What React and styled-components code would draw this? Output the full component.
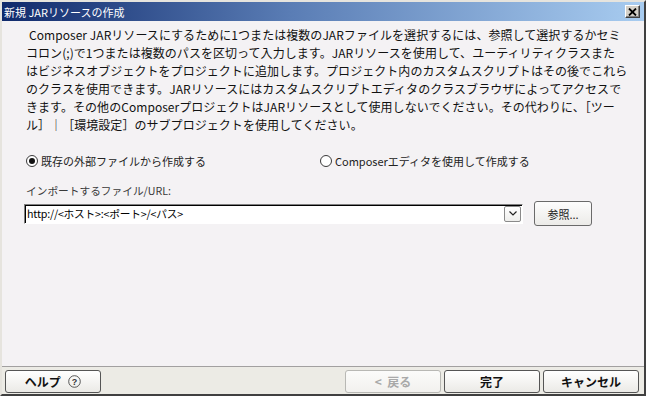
import React, { useState } from 'react'
import styled, { createGlobalStyle } from 'styled-components'

const GlobalStyle = createGlobalStyle`
  html, body {
    margin: 0;
    padding: 0;
    width: 646px;
    height: 396px;
    overflow: hidden;
    background: #d4d0c8;
  }
  * { box-sizing: border-box; }
`

const font = `"Noto Sans CJK JP", "Noto Sans", sans-serif`

const Window = styled.div`
  width: 646px;
  height: 396px;
  display: flex;
  flex-direction: column;
  border: 2px solid;
  border-color: #e6e4de #404040 #404040 #e6e4de;
  background: #d4d0c8;
  font-family: ${font};
  font-size: 12px;
  color: #000;
`

const TitleBar = styled.div`
  height: 19px;
  flex: none;
  display: flex;
  align-items: center;
  padding: 0 4px 0 2px;
  background: linear-gradient(to right, #102a6c 0%, #5a7db5 45%, #a8ccf0 100%);
  color: #fff;
  font-size: 11px;
`

const TitleText = styled.span`
  flex: 1;
  white-space: pre;
`

const CloseButton = styled.div`
  width: 15px;
  height: 13px;
  display: flex;
  align-items: center;
  justify-content: center;
  background: #d4d0c8;
  border: 1px solid;
  border-color: #fff #404040 #404040 #fff;
  box-shadow: inset -1px -1px #808080;
`

const Content = styled.div`
  flex: 1;
  background: #f4f2f4;
  padding: 5px 14px 0 24px;
  display: flex;
  flex-direction: column;
`

const Paragraph = styled.div`
  line-height: 18px;
  font-size: 12px;
  letter-spacing: 0.05px;
  color: #111;
  white-space: nowrap;
`

const Line = styled.div`
  text-indent: ${p => (p.$indent ? '3px' : '0')};
`

const RadioRow = styled.div`
  display: grid;
  grid-template-columns: 294px 1fr;
  margin-top: 19px;
  height: 16px;
  align-items: center;
`

const RadioItem = styled.label`
  display: flex;
  align-items: center;
  gap: 3px;
  color: #222;
  font-size: 11px;
`

const RadioCircle = styled.span`
  width: 12px;
  height: 12px;
  border-radius: 50%;
  border: 1px solid #3a3a3a;
  background: #fff;
  display: flex;
  align-items: center;
  justify-content: center;
  &::after {
    content: '';
    width: 6px;
    height: 6px;
    border-radius: 50%;
    background: ${p => (p.$checked ? '#111' : 'transparent')};
  }
`

const FieldLabel = styled.div`
  margin-top: 13px;
  line-height: 18px;
  color: #3a3a3a;
  font-size: 10.7px;
`

const InputRow = styled.div`
  display: flex;
  align-items: center;
  height: 25px;
  margin-top: 1px;
  margin-left: -2px;
`

const Combo = styled.div`
  width: 499px;
  height: 20px;
  display: flex;
  align-items: center;
  background: #fff;
  border: 1px solid;
  border-color: #808080 #fff #fff #808080;
  box-shadow: inset 1px 1px #000;
  padding: 1px 1px 1px 2px;
`

const ComboText = styled.span`
  flex: 1;
  font-size: 10.7px;
  letter-spacing: -0.2px;
  color: #000;
  white-space: pre;
`

const ComboArrow = styled.span`
  width: 17px;
  height: 16px;
  display: flex;
  align-items: center;
  justify-content: center;
  border: 1px solid #8a8a8a;
  border-radius: 2px;
  background: linear-gradient(#ffffff, #eeeeec);
`

const BrowseButton = styled.button`
  margin-left: 11px;
  width: 58px;
  height: 25px;
  border: 1px solid #6a6a6a;
  border-radius: 3px;
  background: linear-gradient(#fdfdfd, #ecebe8);
  font-family: ${font};
  font-size: 11px;
  color: #222;
  padding: 0;
`

const BottomBar = styled.div`
  flex: none;
  height: 28px;
  border-top: 1px solid #a2a0a0;
  background: #ecebe5;
  display: flex;
  align-items: center;
  padding: 1px 5px 0 3px;
  gap: 3px;
`

const Spacer = styled.div`
  flex: 1;
`

const DialogButton = styled.button`
  width: 96px;
  height: 23px;
  border: 1px solid ${p => (p.disabled ? '#b8b8b4' : '#555')};
  border-radius: 3px;
  background: ${p =>
    p.disabled ? 'linear-gradient(#fbfbfa, #f2f1ee)' : 'linear-gradient(#ffffff, #ebeae6)'};
  font-family: ${font};
  font-size: 12px;
  font-weight: bold;
  color: ${p => (p.disabled ? '#a9a9a9' : '#111')};
  display: flex;
  align-items: center;
  justify-content: center;
  gap: 5px;
  padding: 0;
  white-space: pre;
`

const HelpIcon = () => (
  <svg width="13" height="13" viewBox="0 0 13 13">
    <circle cx="6.5" cy="6.5" r="5.8" fill="none" stroke="#444" strokeWidth="0.9" />
    <text x="6.5" y="10" textAnchor="middle" fontSize="9" fontFamily="Liberation Sans, sans-serif" fill="#333">?</text>
  </svg>
)

const lines = [
  'Composer JARリソースにするために1つまたは複数のJARファイルを選択するには、参照して選択するかセミ',
  'コロン(;)で1つまたは複数のパスを区切って入力します。JARリソースを使用して、ユーティリティクラスまた',
  'はビジネスオブジェクトをプロジェクトに追加します。プロジェクト内のカスタムスクリプトはその後でこれら',
  'のクラスを使用できます。JARリソースにはカスタムスクリプトエディタのクラスブラウザによってアクセスで',
  'きます。その他のComposerプロジェクトはJARリソースとして使用しないでください。その代わりに、［ツー',
  'ル］｜［環境設定］のサブプロジェクトを使用してください。'
]

const App = () => {
  const [mode, setMode] = useState('file')
  return (
    <>
      <GlobalStyle />
      <Window>
        <TitleBar>
          <TitleText>新規 JARリソースの作成</TitleText>
          <CloseButton>
            <svg width="9" height="8" viewBox="0 0 9 8">
              <path d="M1 0.5 L8 7.5 M8 0.5 L1 7.5" stroke="#000" strokeWidth="1.8" />
            </svg>
          </CloseButton>
        </TitleBar>
        <Content>
          <Paragraph>
            {lines.map((l, i) => (
              <Line key={i} $indent={i === 0}>{l}</Line>
            ))}
          </Paragraph>
          <RadioRow>
            <RadioItem onClick={() => setMode('file')}>
              <RadioCircle $checked={mode === 'file'} />
              既存の外部ファイルから作成する
            </RadioItem>
            <RadioItem onClick={() => setMode('editor')}>
              <RadioCircle $checked={mode === 'editor'} />
              Composerエディタを使用して作成する
            </RadioItem>
          </RadioRow>
          <FieldLabel>インポートするファイル/URL:</FieldLabel>
          <InputRow>
            <Combo>
              <ComboText>http://&lt;ホスト&gt;:&lt;ポート&gt;/&lt;パス&gt;</ComboText>
              <ComboArrow>
                <svg width="8" height="5" viewBox="0 0 8 5">
                  <path d="M0.5 0.5 L4 4 L7.5 0.5" fill="none" stroke="#222" strokeWidth="1.2" />
                </svg>
              </ComboArrow>
            </Combo>
            <BrowseButton>参照...</BrowseButton>
          </InputRow>
        </Content>
        <BottomBar>
          <DialogButton>
            ヘルプ <HelpIcon />
          </DialogButton>
          <Spacer />
          <DialogButton disabled>{'<  戻る'}</DialogButton>
          <DialogButton>完了</DialogButton>
          <DialogButton>キャンセル</DialogButton>
        </BottomBar>
      </Window>
    </>
  )
}

export default App
